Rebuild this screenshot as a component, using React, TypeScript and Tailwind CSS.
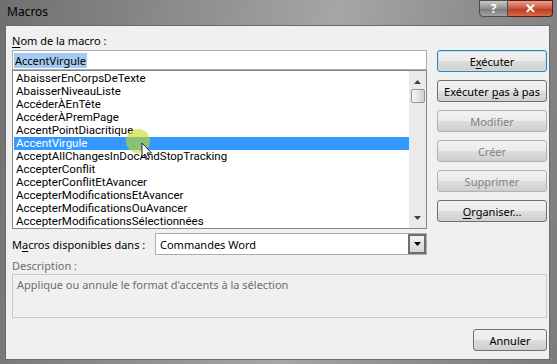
import React from "react";

const MACROS = [
  "AbaisserEnCorpsDeTexte",
  "AbaisserNiveauListe",
  "AccéderÀEnTête",
  "AccéderÀPremPage",
  "AccentPointDiacritique",
  "AccentVirgule",
  "AcceptAllChangesInDocAndStopTracking",
  "AccepterConflit",
  "AccepterConflitEtAvancer",
  "AccepterModificationsEtAvancer",
  "AccepterModificationsOuAvancer",
  "AccepterModificationsSélectionnées",
];

const SELECTED = "AccentVirgule";

function Btn({
  children,
  disabled,
  isDefault,
  className = "",
}: {
  children: React.ReactNode;
  disabled?: boolean;
  isDefault?: boolean;
  className?: string;
}) {
  const border = isDefault
    ? "border-[#3c7fb1] shadow-[inset_0_0_0_1px_#b8e4f8]"
    : disabled
      ? "border-[#adb2b5]"
      : "border-[#707070]";
  return (
    <div
      className={`flex h-[22px] items-center justify-center rounded-[3px] border ${border} bg-[linear-gradient(#f2f2f2_0%,#ebebeb_48%,#dddddd_52%,#cfcfcf_100%)] ${
        disabled ? "text-[#838383]" : "text-black"
      } ${className}`}
    >
      <span className="whitespace-pre">{children}</span>
    </div>
  );
}

function Cursor() {
  return (
    <svg
      className="pointer-events-none absolute left-[125px] top-[128px]"
      width="34"
      height="34"
      viewBox="0 0 34 34"
    >
      <circle cx="13" cy="13" r="12" fill="#c8d81c" opacity="0.6" />
      <path
        d="M17 15 L17 29 L20 26 L22.5 31 L24.5 30 L22 25 L26.5 25 Z"
        fill="#ffffff"
        stroke="#222"
        strokeWidth="1"
        strokeLinejoin="round"
      />
    </svg>
  );
}

export default function App() {
  return (
    <div
      className="relative h-[364px] w-[557px] overflow-hidden bg-[linear-gradient(100deg,#6f6f6f_0%,#8d8d8d_30%,#a6a6a6_55%,#8a8a8a_80%,#7c7c7c_100%)] text-[11px] leading-[15px] text-black"
      style={{ fontFamily: '"Noto Sans", "Open Sans", sans-serif' }}
    >
      {/* title bar */}
      <div className="flex h-[25px] items-start justify-between">
        <div className="pl-[7px] pt-[4px] text-[12px] text-black">Macros</div>
        <div className="mr-[4px] flex h-[17px]">
          <div className="flex w-[29px] items-center justify-center rounded-bl-[4px] border border-[#4d4d4d] bg-[linear-gradient(#c8c8c8,#8f8f8f_50%,#7a7a7a_51%,#a0a0a0)] text-[12px] font-bold text-white">
            ?
          </div>
          <div className="flex w-[45px] items-center justify-center rounded-br-[4px] border border-l-0 border-[#5a1b10] bg-[linear-gradient(#e8a091,#c8543c_50%,#b8391e_51%,#d6694a)] text-[13px] font-bold text-white">
            ✕
          </div>
        </div>
      </div>

      {/* client area */}
      <div className="ml-[5px] h-[335px] w-[545px] border border-[#6a6a6a] bg-[#f0f0f0] pl-[6px] pt-[7px]">
        <div className="h-[17px]">
          <span className="underline underline-offset-2">N</span>om de la macro :
        </div>

        <div className="flex gap-[10px]">
          {/* left column */}
          <div className="w-[415px]">
            <div className="flex h-[20px] items-center border border-[#abadb3] bg-white px-[1px]">
              <span className="bg-[#a3caf2] px-[1px]">{SELECTED}</span>
            </div>
            <div className="flex h-[159px] border border-[#828790] bg-white">
              <div
                className="flex-1 pl-[1px] pt-[1px] text-[11.5px]"
                style={{ fontFamily: 'Roboto, "Noto Sans", sans-serif' }}
              >
                {MACROS.map((m) => (
                  <div
                    key={m}
                    className={`h-[13px] pl-[2px] leading-[13px] ${
                      m === SELECTED ? "bg-[#3399ff] text-white" : ""
                    }`}
                  >
                    {m}
                  </div>
                ))}
              </div>
              {/* scrollbar */}
              <div className="flex w-[17px] flex-col items-center bg-[#eaeaea] pt-[9px]">
                <svg width="7" height="4" viewBox="0 0 7 4">
                  <path d="M0 4 L3.5 0 L7 4 Z" fill="#404040" />
                </svg>
                <div className="mt-[5px] h-[14px] w-[14px] rounded-[2px] border border-[#979797] bg-[linear-gradient(90deg,#f4f4f4,#e2e2e2_55%,#cfcfcf)]" />
                <div className="flex-1" />
                <svg className="mb-[8px]" width="7" height="4" viewBox="0 0 7 4">
                  <path d="M0 0 L7 0 L3.5 4 Z" fill="#404040" />
                </svg>
              </div>
            </div>
          </div>

          {/* right column */}
          <div className="flex w-[110px] flex-col gap-[8px]">
            <Btn isDefault>
              E<span className="underline underline-offset-2">x</span>écuter
            </Btn>
            <Btn>
              Exécuter <span className="underline underline-offset-2">p</span>as à pas
            </Btn>
            <Btn disabled>Modifier</Btn>
            <Btn disabled>Créer</Btn>
            <Btn disabled>Supprimer</Btn>
            <Btn>
              <span className="underline underline-offset-2">O</span>rganiser...
            </Btn>
          </div>
        </div>

        {/* macros disponibles dans */}
        <div className="mt-[4px] flex h-[22px] items-center">
          <div className="w-[143px] whitespace-nowrap">
            M<span className="underline underline-offset-2">a</span>cros disponibles dans :
          </div>
          <div className="flex h-[22px] w-[272px] items-center border border-[#abadb3] bg-white pl-[4px]">
            <span className="flex-1">Commandes Word</span>
            <div className="flex h-[20px] w-[18px] items-center justify-center border-2 border-[#6e6e6e] bg-[linear-gradient(#f2f2f2,#e4e4e4_50%,#d4d4d4)]">
              <svg width="7" height="4" viewBox="0 0 7 4">
                <path d="M0 0 L7 0 L3.5 4 Z" fill="#000" />
              </svg>
            </div>
          </div>
        </div>

        <div className="mt-[3px] h-[16px] text-[#6d6d6d]">Description :</div>
        <div className="h-[44px] w-[535px] border border-[#c9c9c9] px-[4px] pt-[2px] text-[#6d6d6d]">
          Applique ou annule le format d'accents à la sélection
        </div>

        <div className="mt-[11px] flex w-[535px] justify-end">
          <Btn className="w-[74px]">Annuler</Btn>
        </div>
      </div>

      <Cursor />
    </div>
  );
}
